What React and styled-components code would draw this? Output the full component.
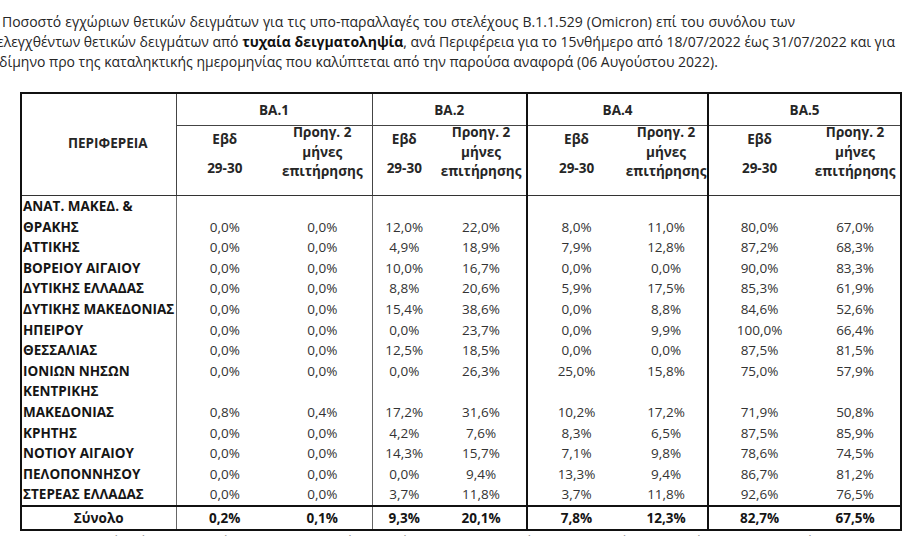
import React from "react";
import styled, { createGlobalStyle } from "styled-components";

const GlobalStyle = createGlobalStyle`
  html, body {
    margin: 0;
    padding: 0;
    background: #ffffff;
  }
  body {
    font-family: "Open Sans", "Noto Sans", "DejaVu Sans", sans-serif;
    color: #222222;
  }
`;

const Page = styled.div`
  width: 907px;
  height: 536px;
  overflow: hidden;
  padding-top: 12px;
  box-sizing: border-box;
`;

const Intro = styled.div`
  font-size: 14px;
  line-height: 20px;
  color: #262626;
`;

const IntroLine = styled.div`
  white-space: nowrap;
  margin-left: ${(props) => props.$shift || 0}px;
  word-spacing: ${(props) => props.$spread || 0}px;
`;

const Strong = styled.b`
  font-weight: 700;
  color: #111;
`;

const Table = styled.table`
  margin: 20px 0 0 20px;
  width: 880px;
  border-collapse: collapse;
  table-layout: fixed;
  border: 2px solid #111;
  font-size: 13.5px;
  color: #262626;
`;

const GroupHead = styled.th`
  height: 31px;
  padding: 0;
  font-weight: 700;
  text-align: center;
  vertical-align: middle;
  border-left: ${(props) => (props.$thick ? "2px solid #111" : "1px solid #444")};
  border-bottom: 1px solid #444;
`;

const RegionHead = styled.th`
  padding: 0 0 4px 18px;
  font-weight: 700;
  text-align: center;
  vertical-align: middle;
  border-bottom: 1px solid #333;
`;

const SubHead = styled.th`
  height: 69px;
  padding: 0;
  font-weight: 700;
  text-align: center;
  vertical-align: top;
  border-bottom: 1px solid #333;
  border-left: ${(props) =>
    props.$edge === "thick" ? "2px solid #111" : props.$edge === "thin" ? "1px solid #444" : "none"};
`;

const HeadText = styled.div`
  line-height: ${(props) => (props.$tall ? 29 : 19.5)}px;
  margin-top: ${(props) => (props.$tall ? -1 : -3)}px;
`;

const Region = styled.td`
  padding: 0 0 0 1px;
  font-weight: 700;
  color: #151515;
  line-height: 20.6px;
  vertical-align: bottom;
  white-space: nowrap;
`;

const Num = styled.td`
  padding: 0;
  text-align: center;
  line-height: 20.6px;
  vertical-align: bottom;
  color: #333;
  border-left: ${(props) =>
    props.$edge === "thick" ? "2px solid #111" : props.$edge === "thin" ? "1px solid #666" : "none"};
`;

const TotalRow = styled.tr`
  border-top: 2px solid #111;
  td {
    height: 20px;
    line-height: 20px;
    font-weight: 700;
    color: #151515;
    vertical-align: middle;
  }
`;

const TotalLabel = styled.td`
  text-align: center;
`;

const Footnote = styled.div`
  margin-top: 0;
  text-align: center;
  font-size: 13.5px;
  font-style: italic;
  line-height: 20px;
  color: #333;
  white-space: nowrap;
`;

const widths = [155, 97, 99, 64, 91, 98, 83, 102, 91];
const edges = ["thin", null, "thin", null, "thick", null, "thick", null];
const groups = ["ΒΑ.1", "ΒΑ.2", "ΒΑ.4", "ΒΑ.5"];

const rows = [
  [["ΑΝΑΤ. ΜΑΚΕΔ. &", "ΘΡΑΚΗΣ"], "0,0%", "0,0%", "12,0%", "22,0%", "8,0%", "11,0%", "80,0%", "67,0%"],
  [["ΑΤΤΙΚΗΣ"], "0,0%", "0,0%", "4,9%", "18,9%", "7,9%", "12,8%", "87,2%", "68,3%"],
  [["ΒΟΡΕΙΟΥ ΑΙΓΑΙΟΥ"], "0,0%", "0,0%", "10,0%", "16,7%", "0,0%", "0,0%", "90,0%", "83,3%"],
  [["ΔΥΤΙΚΗΣ ΕΛΛΑΔΑΣ"], "0,0%", "0,0%", "8,8%", "20,6%", "5,9%", "17,5%", "85,3%", "61,9%"],
  [["ΔΥΤΙΚΗΣ ΜΑΚΕΔΟΝΙΑΣ"], "0,0%", "0,0%", "15,4%", "38,6%", "0,0%", "8,8%", "84,6%", "52,6%"],
  [["ΗΠΕΙΡΟΥ"], "0,0%", "0,0%", "0,0%", "23,7%", "0,0%", "9,9%", "100,0%", "66,4%"],
  [["ΘΕΣΣΑΛΙΑΣ"], "0,0%", "0,0%", "12,5%", "18,5%", "0,0%", "0,0%", "87,5%", "81,5%"],
  [["ΙΟΝΙΩΝ ΝΗΣΩΝ"], "0,0%", "0,0%", "0,0%", "26,3%", "25,0%", "15,8%", "75,0%", "57,9%"],
  [["ΚΕΝΤΡΙΚΗΣ", "ΜΑΚΕΔΟΝΙΑΣ"], "0,8%", "0,4%", "17,2%", "31,6%", "10,2%", "17,2%", "71,9%", "50,8%"],
  [["ΚΡΗΤΗΣ"], "0,0%", "0,0%", "4,2%", "7,6%", "8,3%", "6,5%", "87,5%", "85,9%"],
  [["ΝΟΤΙΟΥ ΑΙΓΑΙΟΥ"], "0,0%", "0,0%", "14,3%", "15,7%", "7,1%", "9,8%", "78,6%", "74,5%"],
  [["ΠΕΛΟΠΟΝΝΗΣΟΥ"], "0,0%", "0,0%", "0,0%", "9,4%", "13,3%", "9,4%", "86,7%", "81,2%"],
  [["ΣΤΕΡΕΑΣ ΕΛΛΑΔΑΣ"], "0,0%", "0,0%", "3,7%", "11,8%", "3,7%", "11,8%", "92,6%", "76,5%"],
];

const totals = ["0,2%", "0,1%", "9,3%", "20,1%", "7,8%", "12,3%", "82,7%", "67,5%"];

export default function App() {
  return (
    <>
      <GlobalStyle />
      <Page>
        <Intro>
          <IntroLine $shift={2} $spread={0.5}>
            Ποσοστό εγχώριων θετικών δειγμάτων για τις υπο-παραλλαγές του στελέχους Β.1.1.529 (Omicron) επί του συνόλου των
          </IntroLine>
          <IntroLine $shift={-3}>
            ελεγχθέντων θετικών δειγμάτων από <Strong>τυχαία δειγματοληψία</Strong>, ανά Περιφέρεια για το 15νθήμερο από 18/07/2022 έως 31/07/2022 και για
          </IntroLine>
          <IntroLine $shift={-1}>
            δίμηνο προ της καταληκτικής ημερομηνίας που καλύπτεται από την παρούσα αναφορά (06 Αυγούστου 2022).
          </IntroLine>
        </Intro>

        <Table>
          <colgroup>
            {widths.map((w, i) => (
              <col key={i} style={{ width: w }} />
            ))}
          </colgroup>
          <thead>
            <tr>
              <RegionHead rowSpan={2}>ΠΕΡΙΦΕΡΕΙΑ</RegionHead>
              {groups.map((g, i) => (
                <GroupHead key={g} colSpan={2} $thick={i >= 2}>
                  {g}
                </GroupHead>
              ))}
            </tr>
            <tr>
              {groups.map((g, i) => (
                <React.Fragment key={g}>
                  <SubHead $edge={edges[i * 2]}>
                    <HeadText $tall>
                      Εβδ
                      <br />
                      29-30
                    </HeadText>
                  </SubHead>
                  <SubHead>
                    <HeadText>
                      Προηγ. 2
                      <br />
                      μήνες
                      <br />
                      επιτήρησης
                    </HeadText>
                  </SubHead>
                </React.Fragment>
              ))}
            </tr>
          </thead>
          <tbody>
            {rows.map(([name, ...values]) => (
              <tr key={name.join(" ")}>
                <Region>
                  {name.map((line, i) => (
                    <div key={i}>{line}</div>
                  ))}
                </Region>
                {values.map((v, i) => (
                  <Num key={i} $edge={edges[i]}>
                    {v}
                  </Num>
                ))}
              </tr>
            ))}
            <TotalRow>
              <TotalLabel>Σύνολο</TotalLabel>
              {totals.map((v, i) => (
                <Num key={i} $edge={edges[i]}>
                  {v}
                </Num>
              ))}
            </TotalRow>
          </tbody>
        </Table>

        <Footnote>
          Θεωρείται ότι η κατανομή των υπο-παραλλαγών στα δείγματα αντιπροσωπεύει την κατανομή τους στο σύνολο των κρουσμάτων
        </Footnote>
      </Page>
    </>
  );
}
